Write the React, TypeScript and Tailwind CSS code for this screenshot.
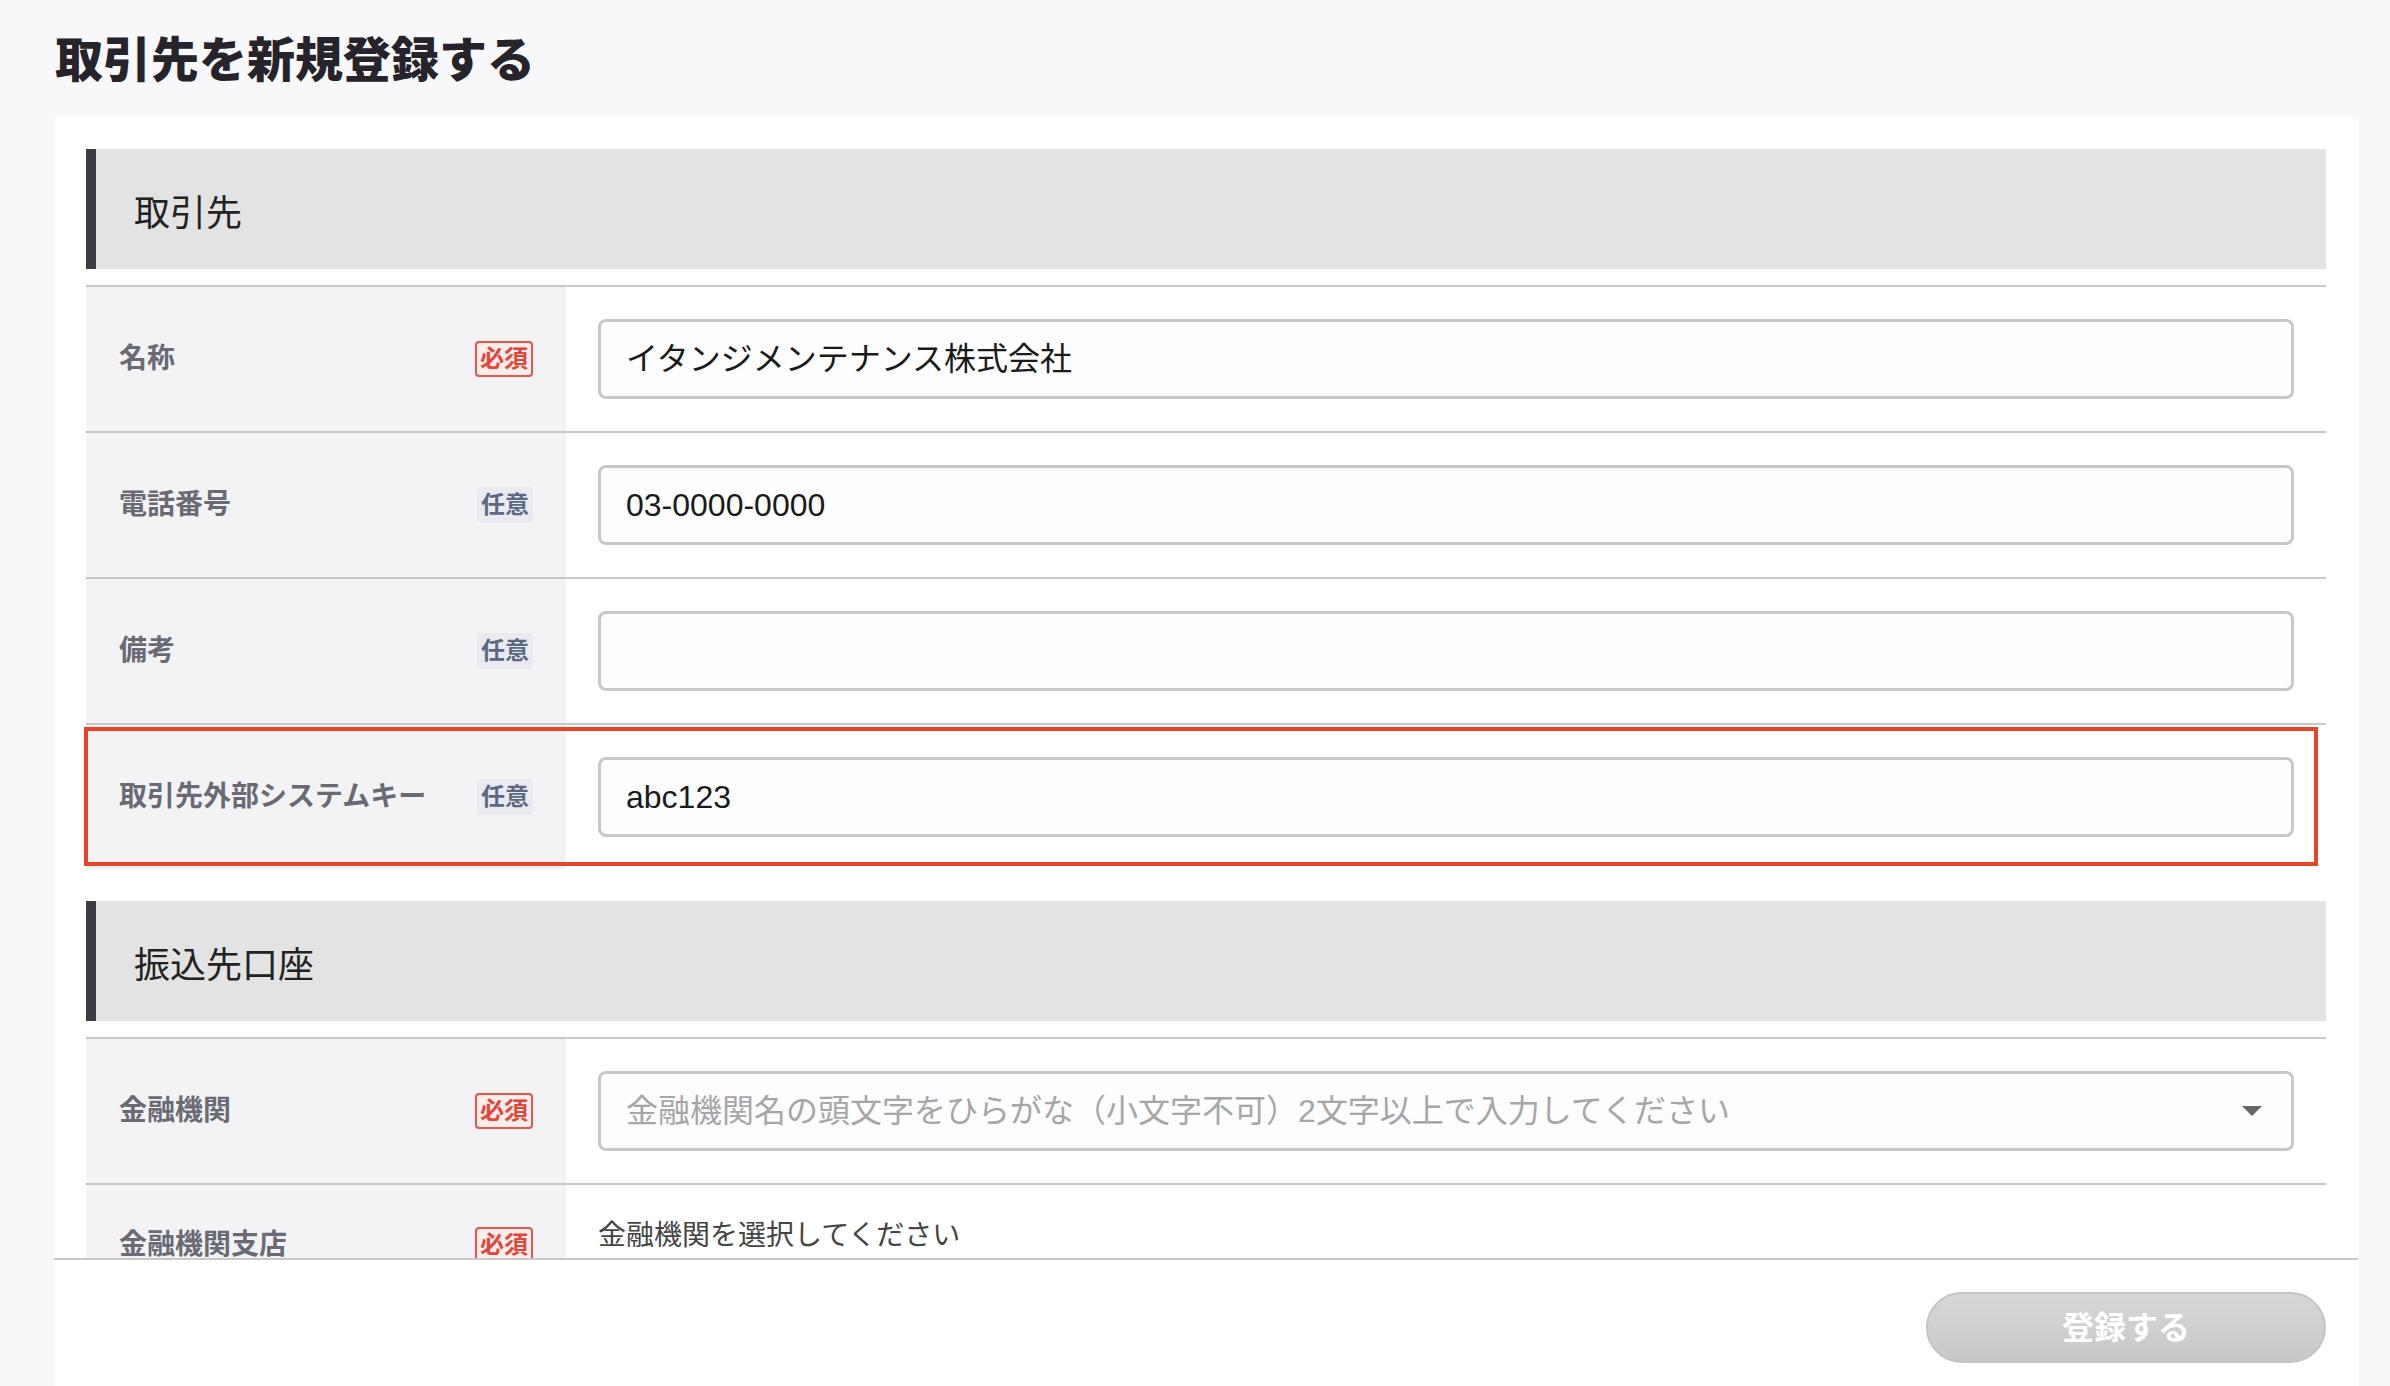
import React from "react";

function Badge({ required }: { required: boolean }) {
  return required ? (
    <span className="inline-flex h-[36px] items-center rounded-[4px] border-2 border-[#e8574a] bg-[#fdeeec] px-[3px] text-[24px] font-bold leading-none text-[#e2453a]">
      必須
    </span>
  ) : (
    <span className="inline-flex h-[36px] items-center rounded-[4px] bg-[#e9ebf0] px-[4px] text-[24px] font-bold leading-none text-[#5d6883]">
      任意
    </span>
  );
}

function Row({
  label,
  required,
  children,
  highlight,
}: {
  label: string;
  required: boolean;
  children: React.ReactNode;
  highlight?: boolean;
}) {
  return (
    <div className="relative flex border-t-2 border-[#c8c8c8]">
      <div className="flex w-[480px] shrink-0 items-center justify-between bg-[#f3f3f5] px-[33px]">
        <span className="text-[28px] font-bold text-[#6a6a74]">{label}</span>
        <Badge required={required} />
      </div>
      <div className="flex-1 px-[32px] py-[32px]">{children}</div>
      {highlight && (
        <div className="pointer-events-none absolute bottom-[3px] left-[-2px] right-[8px] top-[2px] border-4 border-[#e8432b]" />
      )}
    </div>
  );
}

function Field({ value, placeholder }: { value?: string; placeholder?: string }) {
  return (
    <div className="flex h-[80px] items-center rounded-[8px] border-[3px] border-[#c8c8c8] bg-[#fdfdfe] px-[25px] text-[32px] text-[#1a1a1a]">
      {value ? <span>{value}</span> : placeholder ? <span className="text-[#a6a6a8]">{placeholder}</span> : null}
    </div>
  );
}

function SectionHeader({ title }: { title: string }) {
  return (
    <div className="flex h-[120px] items-center border-l-[10px] border-[#3f3b45] bg-[#e3e3e3] pl-[38px] pt-[10px] text-[36px] text-[#222222]">
      {title}
    </div>
  );
}

export default function App() {
  return (
    <div className="flex h-screen flex-col overflow-hidden bg-[#f8f8fa] font-['Liberation_Sans','Noto_Sans_CJK_JP',sans-serif]">
      <div className="flex h-[117px] shrink-0 items-center pb-[6px] pl-[55px] font-['Noto_Sans_CJK_JP',sans-serif] text-[48px] font-black text-[#26232b]">
        取引先を新規登録する
      </div>
      <div className="ml-[54px] mr-[32px] flex min-h-0 flex-1 flex-col bg-white">
        <div className="min-h-0 flex-1 overflow-hidden px-[32px] pt-[32px]">
          <SectionHeader title="取引先" />
          <div className="mt-[16px]">
            <Row label="名称" required>
              <Field value="イタンジメンテナンス株式会社" />
            </Row>
            <Row label="電話番号" required={false}>
              <Field value="03-0000-0000" />
            </Row>
            <Row label="備考" required={false}>
              <Field />
            </Row>
            <Row label="取引先外部システムキー" required={false} highlight>
              <Field value="abc123" />
            </Row>
          </div>
          <div className="mt-[32px]">
            <SectionHeader title="振込先口座" />
          </div>
          <div className="mt-[16px]">
            <Row label="金融機関" required>
              <div className="flex h-[80px] items-center justify-between rounded-[8px] border-[3px] border-[#c8c8c8] bg-[#fdfdfe] pl-[25px] pr-[29px] text-[32px]">
                <span className="text-[#a6a6a8]">
                  金融機関名の頭文字をひらがな（小文字不可）2文字以上で入力してください
                </span>
                <svg width="20" height="10" viewBox="0 0 20 10">
                  <path d="M0 0 L20 0 L10 10 Z" fill="#666666" />
                </svg>
              </div>
            </Row>
            <div className="relative flex h-[122px] border-t-2 border-[#c8c8c8]">
              <div className="flex w-[480px] shrink-0 items-center justify-between bg-[#f3f3f5] px-[33px]">
                <span className="text-[28px] font-bold text-[#6a6a74]">金融機関支店</span>
                <Badge required />
              </div>
              <div className="flex-1 px-[32px] pt-[30px]">
                <span className="text-[28px] leading-[1.5] text-[#444444]">金融機関を選択してください</span>
              </div>
            </div>
          </div>
        </div>
        <div className="flex h-[128px] shrink-0 items-start justify-end border-t-2 border-[#c8c8c8] pr-[32px] pt-[32px]">
          <button className="h-[71px] w-[400px] rounded-full border-2 border-[#c4c4c6] bg-linear-to-b from-[#d7d7d9] to-[#c8c8ca] text-[32px] font-bold text-white">
            登録する
          </button>
        </div>
      </div>
    </div>
  );
}
